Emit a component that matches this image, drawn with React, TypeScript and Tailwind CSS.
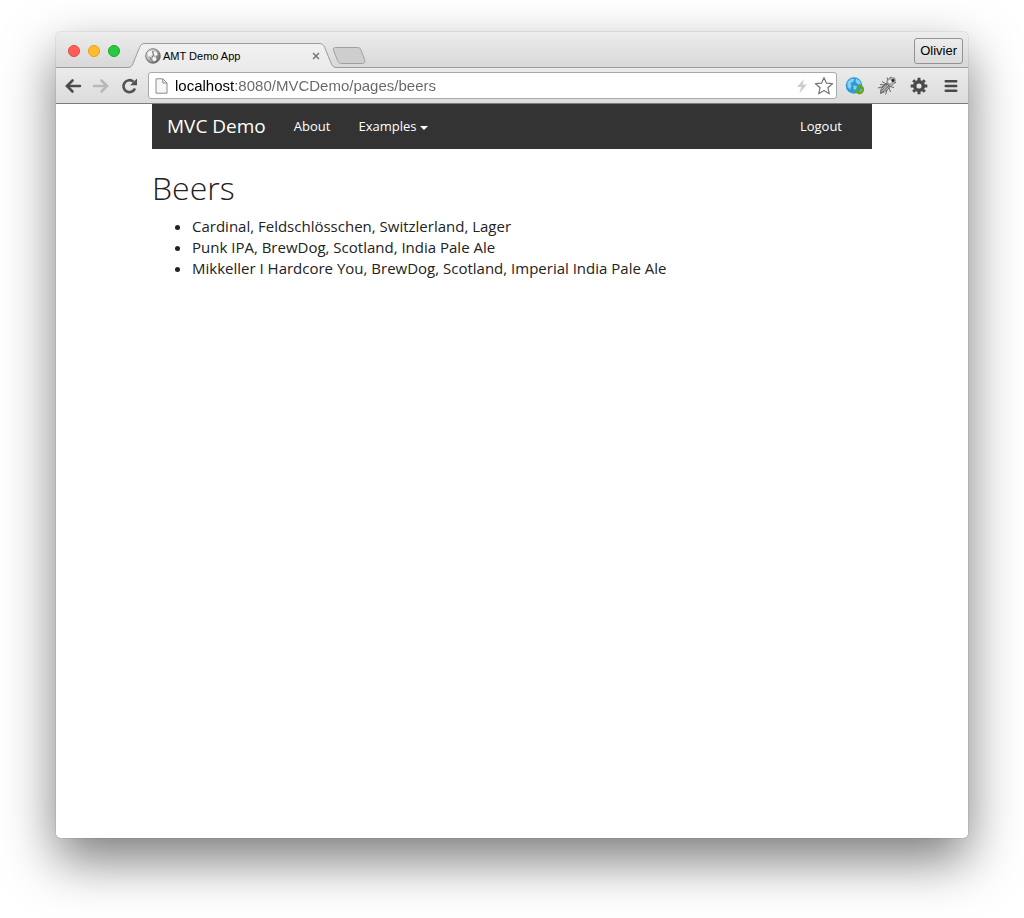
import React from "react";

const beers = [
  "Cardinal, Feldschlösschen, Switzlerland, Lager",
  "Punk IPA, BrewDog, Scotland, India Pale Ale",
  "Mikkeller I Hardcore You, BrewDog, Scotland, Imperial India Pale Ale",
];

function TabShape() {
  return (
    <svg className="absolute inset-0 h-full w-full" viewBox="0 0 212 25" fill="none" aria-hidden="true">
      <defs>
        <linearGradient id="tabFill" x1="0" y1="0" x2="0" y2="1">
          <stop offset="0" stopColor="#f1f1f1" />
          <stop offset="1" stopColor="#ebebeb" />
        </linearGradient>
      </defs>
      <path d="M0 25V24.5C3 24.5 4 23 5 20.5L11.5 4.5C12.8 1.5 14 .5 17 .5H191C194 .5 195.500 1.500 196.700 4.500L203 20C204.200 23 205.500 24.500 209 24.500H212V25Z" fill="url(#tabFill)" />
      <path d="M0 24.500C3 24.500 4 23 5 20.500L11.500 4.500C12.800 1.500 14 .5 17 .5H191C194 .5 195.500 1.500 196.700 4.500L203 20C204.200 23 205.500 24.500 209 24.500H212" stroke="#9b9b9b" />
    </svg>
  );
}

function Favicon() {
  return (
    <svg className="h-4 w-4 shrink-0" viewBox="0 0 16 16" aria-hidden="true">
      <defs>
        <radialGradient id="fav" cx=".3" cy=".3" r=".85">
          <stop offset="0" stopColor="#f4f4f4" />
          <stop offset=".5" stopColor="#b8b8b8" />
          <stop offset="1" stopColor="#4c4c4c" />
        </radialGradient>
      </defs>
      <circle cx="8" cy="8" r="7.300" fill="url(#fav)" stroke="#6a6a6a" strokeWidth=".8" />
      <path d="M3.500 4.500 6 3.500 7.500 5.500 5.500 8 3 7.500ZM9 3.500 11.500 4 12.500 6.500 10.500 8 9 6ZM8 9 11 9.500 11.500 12 9 13.500 7.500 11.500Z" fill="#f7f7f7" />
      <path d="M7.500 3 8.500 7 7 9.500M5 9 6.500 12M11.500 8.500 13 9.500" stroke="#6b6b6b" strokeWidth=".9" fill="none" />
    </svg>
  );
}

function TitleBar() {
  return (
    <div className="flex h-9 items-end border-b border-[#999999] bg-linear-to-b from-[#ededed] to-[#d8d8d8] pr-[5px] pl-3">
      <div className="flex gap-2 pb-[10px]">
        <button aria-label="Close window" className="h-3 w-3 rounded-full border border-[#e2463f] bg-[#ff5f57]" />
        <button aria-label="Minimize window" className="h-3 w-3 rounded-full border border-[#e1a116] bg-[#ffbd2e]" />
        <button aria-label="Zoom window" className="h-3 w-3 rounded-full border border-[#12ac28] bg-[#28c940]" />
      </div>
      <div className="relative -mb-px ml-2 h-[25px] w-[212px]">
        <TabShape />
        <div className="relative flex h-full items-center pr-4 pl-[17px]">
          <Favicon />
          <span className="ml-[2px] flex-1 text-[11px] leading-4 text-black">AMT Demo App</span>
          <button aria-label="Close tab" className="flex h-4 w-4 items-center justify-center">
            <svg className="h-2 w-2" viewBox="0 0 8 8" aria-hidden="true">
              <path d="M1 1 7 7M7 1 1 7" stroke="#777" strokeWidth="1.500" />
            </svg>
          </button>
        </div>
      </div>
      <button aria-label="New tab" className="mb-[3px] -ml-2 h-[17px] w-[34px] shrink-0">
        <svg className="h-full w-full" viewBox="0 0 34 17" aria-hidden="true">
          <path d="M3.500 .5H25.500C27.500 .5 28.200 1 29 3L32.500 12.500C33.300 15 33 16.500 30.500 16.500H10C7.500 16.500 6.500 15.500 5.600 13.500L1.500 3.500C.8 1.500 1.500 .5 3.500 .5Z" fill="#cecece" stroke="#a0a0a0" />
        </svg>
      </button>
      <button className="mb-[3px] ml-auto h-[26px] rounded-[3px] border border-[#929292] bg-linear-to-b from-[#ededed] to-[#dcdcdc] px-[5px] text-[13px] leading-4 text-black">
        Olivier
      </button>
    </div>
  );
}

function BackArrow({ className }: { className: string }) {
  return (
    <svg className={className} viewBox="0 0 18 16" fill="none" stroke="currentColor" aria-hidden="true">
      <path d="M3 8H16" strokeWidth="2.500" strokeLinecap="round" />
      <path d="M8.500 2.500 3 8 8.500 13.500" strokeWidth="2.600" strokeLinecap="round" />
    </svg>
  );
}

function Toolbar() {
  return (
    <div className="flex h-9 items-center border-b border-[#7c7c7c] bg-linear-to-b from-[#ebebeb] to-[#dcdcdc] pr-[7px] pl-2">
      <button aria-label="Back" className="text-[#4c4c4c]">
        <BackArrow className="h-4 w-[18px]" />
      </button>
      <button aria-label="Forward" className="ml-[10px] text-[#b9b9b9]">
        <BackArrow className="h-4 w-[18px] rotate-180" />
      </button>
      <button aria-label="Reload" className="ml-[10px]">
        <svg className="h-[18px] w-[18px]" viewBox="0 0 18 18" fill="none" aria-hidden="true">
          <path d="M15 11.500A6 6 0 1 1 13.500 4.700" stroke="#525252" strokeWidth="2.600" />
          <path d="M17 1.500V8.200H10.200Z" fill="#525252" />
        </svg>
      </button>
      <div className="ml-[10px] flex h-[27px] flex-1 items-center rounded-[3px] border border-[#a9a9a9] bg-white pr-[2px] pl-[6px]">
        <svg className="h-4 w-[13px] shrink-0" viewBox="0 0 13 16" fill="none" aria-hidden="true">
          <path d="M1 .8H7.800L12 5V15.200H1Z" fill="#f7f7f7" stroke="#8c8c8c" />
          <path d="M7.800 .8V5H12" stroke="#8c8c8c" />
        </svg>
        {/* The host part is black and the rest of the address grey. */}
        <input
          aria-label="Address"
          defaultValue="localhost:8080/MVCDemo/pages/beers"
          className="ml-[7px] h-5 min-w-0 flex-1 bg-[linear-gradient(90deg,#000000_60px,#666666_60px)] bg-clip-text text-[15px] leading-5 text-transparent caret-black outline-none"
        />
        <svg className="h-[14px] w-3 shrink-0" viewBox="0 0 12 14" aria-hidden="true">
          <path d="M8 0 1 8H5.200L3.500 14 11 5.600H6.500Z" fill="#cccccc" />
        </svg>
        <button aria-label="Bookmark" className="ml-[6px]">
          <svg className="h-5 w-5" viewBox="0 0 20 20" aria-hidden="true">
            <path d="M10 1.500 12.400 7.200 18.500 7.700 13.900 11.700 15.300 17.800 10 14.500 4.700 17.800 6.100 11.700 1.500 7.700 7.600 7.200Z" fill="white" stroke="#777" strokeWidth="1.200" strokeLinejoin="round" />
          </svg>
        </button>
      </div>
      <button aria-label="Globe extension" className="ml-2">
        <svg className="h-5 w-5" viewBox="0 0 20 20" fill="none" aria-hidden="true">
          <circle cx="9" cy="9.500" r="8.300" fill="#2b9bd8" />
          <path d="M2.500 6 6 2.800 9.500 3 8 6 5.500 7 6.500 10 5 13.500 2.500 11ZM11 2.500 15 5 16 8.500 12.500 8 10.500 5.500ZM8.500 9.500 12 10 10.500 14.500 8.500 13Z" fill="#86d0f3" />
          <path d="M12.500 10.700A3.400 3.400 0 1 1 11.300 14.800" stroke="#6aa516" strokeWidth="2.600" />
          <path d="M9 14 13.200 12.200 13.500 17Z" fill="#6aa516" />
        </svg>
      </button>
      <button aria-label="Bug extension" className="ml-3">
        <svg className="h-5 w-5" viewBox="0 0 20 20" fill="none" aria-hidden="true">
          <path d="M9 8 5 5.500M8 9 3 8.500M6.500 10.500 1 12M10 14 8.500 18.500M12 12 13.500 16M13 10.500 17 11.500M11 5 10 1.500M13 3 13.500 .8M17 7 19 6.500" stroke="#666" />
          <path d="M10 7 13 10.500C11 14 8 16 3.500 17.500 3 13 6 9 10 7Z" fill="#777" stroke="#555" strokeWidth=".7" />
          <path d="M4.500 16 11 9M4.500 13.500 9 9.500M7 15.500 11.500 11.500" stroke="#d5d5d5" strokeWidth=".8" />
          <path d="M10 4.500C12 1.500 16 .8 18 2.500 19 5.500 17 9 13.500 10L10 7Z" fill="#b2b2b2" stroke="#777" strokeWidth=".7" />
          <circle cx="16" cy="4.500" r="1.400" fill="#222" />
          <circle cx="12.800" cy="5.500" r="1.500" fill="#f5f5f5" />
        </svg>
      </button>
      <button aria-label="Settings" className="ml-3">
        <svg className="h-5 w-5" viewBox="0 0 20 20" fill="none" stroke="#484848" aria-hidden="true">
          <circle cx="10" cy="10" r="4.300" strokeWidth="3.400" />
          <path d="M10 1.700V5M10 15V18.300M1.700 10H5M15 10H18.300M4.200 4.200 6 6M14 14 15.800 15.800M4.200 15.800 6 14M14 6 15.800 4.200" strokeWidth="3" />
        </svg>
      </button>
      <button aria-label="Menu" className="ml-3">
        <svg className="h-5 w-5" viewBox="0 0 20 20" aria-hidden="true">
          <path d="M4.800 5.300H15.200M4.800 10H15.200M4.800 14.700H15.200" stroke="#484848" strokeWidth="2.600" strokeLinecap="round" />
        </svg>
      </button>
    </div>
  );
}

function Page() {
  return (
    <div className="mx-auto w-full max-w-[720px] font-['Open_Sans',sans-serif] text-[#222222]">
      <nav className="flex h-[45px] items-center bg-[#333333] px-[15px] pb-[2px] text-[13px] leading-5 text-white">
        <a href="#home" className="text-[19px]">MVC Demo</a>
        <a href="#about" className="ml-7">About</a>
        <a href="#examples" className="ml-7 flex items-center gap-1">
          Examples
          <svg className="mt-1 h-1 w-2" viewBox="0 0 8 4" fill="white" aria-hidden="true">
            <path d="M0 0H8L4 4Z" />
          </svg>
        </a>
        <a href="#logout" className="mr-[15px] ml-auto">Logout</a>
      </nav>
      <h1 className="mt-5 text-[32px] leading-[38px] font-light">Beers</h1>
      <ul className="mt-[9px] list-disc pl-10 text-[15px] leading-[21px]">
        {beers.map((beer) => (
          <li key={beer}>{beer}</li>
        ))}
      </ul>
    </div>
  );
}

export default function App() {
  return (
    <div className="flex min-h-screen flex-col overflow-hidden bg-white px-14 pt-8 pb-20 font-['Liberation_Sans',sans-serif]">
      <div className="flex flex-1 flex-col rounded-[5px] shadow-[0_0_1px_rgba(0,0,0,0.6),0_22px_52px_rgba(0,0,0,0.52)]">
        <div className="flex flex-1 flex-col overflow-hidden rounded-[5px] bg-white">
          <TitleBar />
          <Toolbar />
          <main className="flex-1">
            <Page />
          </main>
        </div>
      </div>
    </div>
  );
}
